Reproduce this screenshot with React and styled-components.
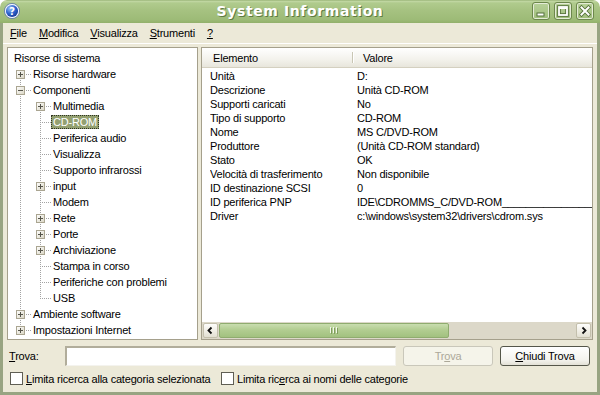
import React from "react";
import styled, { createGlobalStyle, css } from "styled-components";

const GlobalStyle = createGlobalStyle`
  html, body {
    margin: 0;
    padding: 0;
    background: #ffffff;
  }
  body {
    font-family: "Liberation Sans", Arial, sans-serif;
    font-size: 11px;
    letter-spacing: -0.2px;
    color: #000;
  }
  u {
    text-decoration-thickness: 1px;
    text-underline-offset: 1px;
  }
`;

const Window = styled.div`
  width: 600px;
  height: 395px;
  display: flex;
  flex-direction: column;
  background: #ece9d8;
  border-radius: 7px 7px 0 0;
  overflow: hidden;
`;

const TitleBar = styled.div`
  height: 23px;
  flex: none;
  display: grid;
  grid-template-columns: 1fr auto 1fr;
  align-items: center;
  background: linear-gradient(
    #8aa866 0,
    #c4d9a6 1px,
    #b0cb8d 3px,
    #a6c281 45%,
    #9dbb77 85%,
    #92b06b 100%
  );
  border-radius: 7px 7px 0 0;
`;

const TitleIcon = styled.span`
  display: flex;
  margin-left: 4px;
  margin-top: -1px;
`;

const TitleText = styled.div`
  font-family: "DejaVu Sans", Verdana, sans-serif;
  font-weight: bold;
  font-size: 14px;
  letter-spacing: 0.6px;
  color: #fff;
  text-shadow: 1px 1px 0 #5f7b42;
  margin-top: -1px;
`;

const TitleButtons = styled.div`
  justify-self: end;
  display: flex;
  gap: 4px;
  margin-right: 6px;
  margin-top: -1px;
`;

const TitleButton = styled.span`
  width: 18px;
  height: 18px;
  box-sizing: border-box;
  display: flex;
  align-items: center;
  justify-content: center;
  border: 1px solid #6c874c;
  border-radius: 3px;
  box-shadow: inset 0 0 0 1px #e4ecd7;
  background: linear-gradient(#b8d19a, #9fbd7a);
`;

const Frame = styled.div`
  flex: 1;
  display: flex;
  flex-direction: column;
  border: 3px solid #98a482;
  border-top: 0;
`;

const MenuBar = styled.div`
  height: 20px;
  flex: none;
  display: flex;
  align-items: center;
  padding-left: 1px;
  border-bottom: 1px solid #ffffff;
`;

const MenuItem = styled.span`
  padding: 0 6px;
`;

const Main = styled.div`
  height: 293px;
  flex: none;
  display: flex;
  gap: 3px;
  margin: 3px 4px 0;
`;

const TreePanel = styled.div`
  width: 191px;
  box-sizing: border-box;
  border: 1px solid #a5a08c;
  background: #fff;
  padding-top: 2px;
  overflow: hidden;
`;

const TreeRow = styled.div`
  height: 16px;
  display: flex;
  align-items: center;
  padding-left: ${(p) => (p.$root ? 4 : 3)}px;
  white-space: nowrap;
`;

const NodeLabel = styled.span`
  height: 14px;
  box-sizing: border-box;
  line-height: 12px;
  padding: 0 1px;
  border: 1px solid transparent;
  ${(p) =>
    p.$selected &&
    css`
      background: #93a070;
      color: #fff;
      border: 1px dotted #2f3324;
    `}
`;

const ListPanel = styled.div`
  flex: 1;
  box-sizing: border-box;
  border: 1px solid #a5a08c;
  background: #fff;
  display: flex;
  flex-direction: column;
  overflow: hidden;
`;

const ListHeader = styled.div`
  height: 20px;
  flex: none;
  box-sizing: border-box;
  display: flex;
  background: linear-gradient(#ffffff, #f3f2ec 60%, #e8e6dc);
  border-bottom: 1px solid #d4d0c0;
`;

const HeaderCell = styled.div`
  width: ${(p) => (p.$width ? `${p.$width}px` : "auto")};
  flex: ${(p) => (p.$width ? "none" : "1")};
  display: flex;
  align-items: center;
  padding-left: ${(p) => p.$pad}px;
  box-sizing: border-box;
  border-right: ${(p) => (p.$width ? "1px solid #c9c6b4" : "0")};
  box-shadow: ${(p) => (p.$width ? "1px 0 0 #ffffff" : "none")};
  margin: ${(p) => (p.$width ? "4px 0" : "0")};
`;

const Rows = styled.div`
  flex: 1;
  padding-top: 1px;
  overflow: hidden;
`;

const DataRow = styled.div`
  height: 14px;
  line-height: 14px;
  display: flex;
  padding-left: 8px;
  white-space: nowrap;
`;

const DataCell = styled.span`
  width: ${(p) => (p.$width ? `${p.$width}px` : "auto")};
  flex: ${(p) => (p.$width ? "none" : "1")};
  overflow: hidden;
`;

const ScrollBar = styled.div`
  height: 17px;
  flex: none;
  display: flex;
  background: #dcd8c9;
`;

const ScrollButton = styled.span`
  width: 15px;
  height: 15px;
  margin: 1px;
  box-sizing: border-box;
  flex: none;
  display: flex;
  align-items: center;
  justify-content: center;
  border: 1px solid #c3bfac;
  border-radius: 2px;
  background: linear-gradient(#fdfdfb, #f1efe7 50%, #e2dfd2);
`;

const ScrollTrack = styled.div`
  flex: 1;
  display: flex;
  padding: 1px 0;
`;

const ScrollThumb = styled.span`
  width: ${(p) => p.$width}px;
  box-sizing: border-box;
  display: flex;
  align-items: center;
  justify-content: center;
  border: 1px solid #8fac6f;
  border-radius: 2px;
  background: linear-gradient(#c9ddaf, #b2cd91 45%, #a2c17f);
`;

const FindRow = styled.div`
  height: 20px;
  flex: none;
  display: flex;
  align-items: center;
  margin: 6px 0 0 6px;
`;

const FindLabel = styled.span`
  width: 56px;
  flex: none;
`;

const FindInput = styled.div`
  width: 331px;
  height: 20px;
  box-sizing: border-box;
  flex: none;
  margin-right: 7px;
  background: #fff;
  border-style: solid;
  border-width: 2px 1px 1px 2px;
  border-color: #b1ad9b #f4f3ee #f4f3ee #b1ad9b;
`;

const PushButton = styled.span`
  width: 90px;
  height: 20px;
  box-sizing: border-box;
  flex: none;
  display: flex;
  align-items: center;
  justify-content: center;
  border-radius: 3px;
  margin-right: 7px;
  ${(p) =>
    p.$disabled
      ? css`
          border: 1px solid #c9c7ba;
          background: #f5f4ea;
          color: #aca899;
        `
      : css`
          border: 1px solid #55564a;
          background: linear-gradient(#ffffff, #f4f3ee 70%, #e3e1d6);
          color: #000;
        `}
`;

const CheckRow = styled.div`
  height: 13px;
  flex: none;
  display: flex;
  align-items: center;
  margin: 6px 0 0 7px;
`;

const CheckItem = styled.label`
  width: ${(p) => (p.$width ? `${p.$width}px` : "auto")};
  flex: none;
  display: flex;
  align-items: center;
  gap: 3px;
  white-space: nowrap;
`;

const CheckBox = styled.span`
  width: 13px;
  height: 13px;
  box-sizing: border-box;
  border: 1px solid #5f5e54;
  background: #fff;
`;

const tree = [
  { label: "Risorse di sistema", level: 0 },
  { label: "Risorse hardware", level: 1, exp: "plus", first: true },
  { label: "Componenti", level: 1, exp: "minus" },
  { label: "Multimedia", level: 2, exp: "plus", first: true },
  { label: "CD-ROM", level: 2, selected: true },
  { label: "Periferica audio", level: 2 },
  { label: "Visualizza", level: 2 },
  { label: "Supporto infrarossi", level: 2 },
  { label: "input", level: 2, exp: "plus" },
  { label: "Modem", level: 2 },
  { label: "Rete", level: 2, exp: "plus" },
  { label: "Porte", level: 2, exp: "plus" },
  { label: "Archiviazione", level: 2, exp: "plus" },
  { label: "Stampa in corso", level: 2 },
  { label: "Periferiche con problemi", level: 2 },
  { label: "USB", level: 2, last: true },
  { label: "Ambiente software", level: 1, exp: "plus" },
  { label: "Impostazioni Internet", level: 1, exp: "plus", last: true },
];

const details = [
  ["Unità", "D:"],
  ["Descrizione", "Unità CD-ROM"],
  ["Supporti caricati", "No"],
  ["Tipo di supporto", "CD-ROM"],
  ["Nome", "MS C/DVD-ROM"],
  ["Produttore", "(Unità CD-ROM standard)"],
  ["Stato", "OK"],
  ["Velocità di trasferimento", "Non disponibile"],
  ["ID destinazione SCSI", "0"],
  ["ID periferica PNP", "IDE\\CDROMMS_C/DVD-ROM" + "_".repeat(30)],
  ["Driver", "c:\\windows\\system32\\drivers\\cdrom.sys"],
];

const DOT = "#a3a3a3";

// one 20x16 cell of the tree's dotted connector lines
const TreeGuide = ({ own, first, last, exp }) => {
  const dots = [];
  const y0 = own && first ? 8 : 0;
  const y1 = own && last ? 9 : 16;
  for (let y = y0; y < y1; y += 2) {
    dots.push(<rect key={`v${y}`} x="9" y={y} width="1" height="1" fill={DOT} />);
  }
  if (own) {
    for (let x = 11; x < 20; x += 2) {
      dots.push(<rect key={`h${x}`} x={x} y="8" width="1" height="1" fill={DOT} />);
    }
  }
  return (
    <svg width="20" height="16" style={{ flex: "none" }}>
      <defs>
        <linearGradient id="expfill" x1="0" y1="0" x2="1" y2="1">
          <stop offset="0" stopColor="#ffffff" />
          <stop offset="1" stopColor="#d9d5c3" />
        </linearGradient>
      </defs>
      {dots}
      {own && exp && (
        <g>
          <rect x="5.5" y="4.5" width="8" height="8" fill="url(#expfill)" stroke="#aaa591" />
          <rect x="7" y="8" width="5" height="1" fill="#55544a" />
          {exp === "plus" && <rect x="9" y="6" width="1" height="5" fill="#55544a" />}
        </g>
      )}
    </svg>
  );
};

const TreeNode = ({ node }) => {
  const guides = [];
  for (let i = 0; i < node.level; i++) {
    const own = i === node.level - 1;
    guides.push(
      <TreeGuide
        key={i}
        own={own}
        first={node.first}
        last={node.last}
        exp={node.exp}
      />
    );
  }
  return (
    <TreeRow $root={node.level === 0}>
      {guides}
      <NodeLabel $selected={node.selected}>{node.label}</NodeLabel>
    </TreeRow>
  );
};

const HelpIcon = () => (
  <svg width="16" height="16" viewBox="0 0 16 16">
    <defs>
      <radialGradient id="helpblue" cx="35%" cy="30%" r="75%">
        <stop offset="0" stopColor="#9cc3f7" />
        <stop offset="0.55" stopColor="#2f65cf" />
        <stop offset="1" stopColor="#163c99" />
      </radialGradient>
    </defs>
    <circle cx="8" cy="8" r="7.6" fill="#f2f5fb" stroke="#48669c" strokeWidth="0.7" />
    <circle cx="8" cy="8" r="6.1" fill="url(#helpblue)" />
    <text
      x="8"
      y="12"
      textAnchor="middle"
      fontFamily="DejaVu Sans, sans-serif"
      fontWeight="bold"
      fontSize="10"
      fill="#ffffff"
    >
      ?
    </text>
  </svg>
);

const Glyph = ({ kind }) => {
  const dark = "#55703a";
  if (kind === "min") {
    return (
      <svg width="14" height="14" viewBox="0 0 14 14">
        <rect x="3" y="9" width="7" height="3" fill="#fff" stroke={dark} strokeWidth="1" />
      </svg>
    );
  }
  if (kind === "max") {
    return (
      <svg width="14" height="14" viewBox="0 0 14 14">
        <rect x="3" y="3" width="8" height="8" fill="none" stroke={dark} strokeWidth="3.6" />
        <rect x="3" y="3" width="8" height="8" fill="none" stroke="#fff" strokeWidth="1.8" />
        <rect x="3" y="3.4" width="8" height="1.6" fill="#fff" />
      </svg>
    );
  }
  return (
    <svg width="14" height="14" viewBox="0 0 14 14">
      <path d="M3.5 3.5 L10.5 10.5 M10.5 3.5 L3.5 10.5" stroke={dark} strokeWidth="3.8" strokeLinecap="square" />
      <path d="M3.5 3.5 L10.5 10.5 M10.5 3.5 L3.5 10.5" stroke="#fff" strokeWidth="2" strokeLinecap="square" />
    </svg>
  );
};

const Chevron = ({ dir }) => (
  <svg width="9" height="9" viewBox="0 0 9 9">
    <path
      d={dir === "left" ? "M5.5 1.5 L2.5 4.5 L5.5 7.5" : "M3.5 1.5 L6.5 4.5 L3.5 7.5"}
      stroke="#111"
      strokeWidth="1.8"
      fill="none"
    />
  </svg>
);

const Grip = () => (
  <svg width="8" height="7" viewBox="0 0 8 7">
    {[0, 3, 6].map((x) => (
      <g key={x}>
        <rect x={x} y="0" width="1" height="6" fill="#f2f7ea" />
        <rect x={x + 1} y="1" width="1" height="6" fill="#7f9c5d" />
      </g>
    ))}
  </svg>
);

const menus = [
  ["F", "ile"],
  ["M", "odifica"],
  ["V", "isualizza"],
  ["S", "trumenti"],
  ["?", ""],
];

export default function App() {
  return (
    <>
      <GlobalStyle />
      <Window>
        <TitleBar>
          <TitleIcon>
            <HelpIcon />
          </TitleIcon>
          <TitleText>System Information</TitleText>
          <TitleButtons>
            <TitleButton>
              <Glyph kind="min" />
            </TitleButton>
            <TitleButton>
              <Glyph kind="max" />
            </TitleButton>
            <TitleButton>
              <Glyph kind="close" />
            </TitleButton>
          </TitleButtons>
        </TitleBar>

        <Frame>
          <MenuBar>
            {menus.map(([key, rest]) => (
              <MenuItem key={key}>
                <u>{key}</u>
                {rest}
              </MenuItem>
            ))}
          </MenuBar>

          <Main>
            <TreePanel>
              {tree.map((node) => (
                <TreeNode key={node.label} node={node} />
              ))}
            </TreePanel>

            <ListPanel>
              <ListHeader>
                <HeaderCell $width={151} $pad={11}>
                  Elemento
                </HeaderCell>
                <HeaderCell $pad={10}>Valore</HeaderCell>
              </ListHeader>
              <Rows>
                {details.map(([name, value]) => (
                  <DataRow key={name}>
                    <DataCell $width={147}>{name}</DataCell>
                    <DataCell>{value}</DataCell>
                  </DataRow>
                ))}
              </Rows>
              <ScrollBar>
                <ScrollButton>
                  <Chevron dir="left" />
                </ScrollButton>
                <ScrollTrack>
                  <ScrollThumb $width={230}>
                    <Grip />
                  </ScrollThumb>
                </ScrollTrack>
                <ScrollButton>
                  <Chevron dir="right" />
                </ScrollButton>
              </ScrollBar>
            </ListPanel>
          </Main>

          <FindRow>
            <FindLabel>
              <u>T</u>rova:
            </FindLabel>
            <FindInput />
            <PushButton $disabled>
              Tr<u>o</u>va
            </PushButton>
            <PushButton>
              <u>C</u>hiudi Trova
            </PushButton>
          </FindRow>

          <CheckRow>
            <CheckItem $width={211}>
              <CheckBox />
              <span>
                <u>L</u>imita ricerca alla categoria selezionata
              </span>
            </CheckItem>
            <CheckItem>
              <CheckBox />
              <span>
                Limita ric<u>e</u>rca ai nomi delle categorie
              </span>
            </CheckItem>
          </CheckRow>
        </Frame>
      </Window>
    </>
  );
}
